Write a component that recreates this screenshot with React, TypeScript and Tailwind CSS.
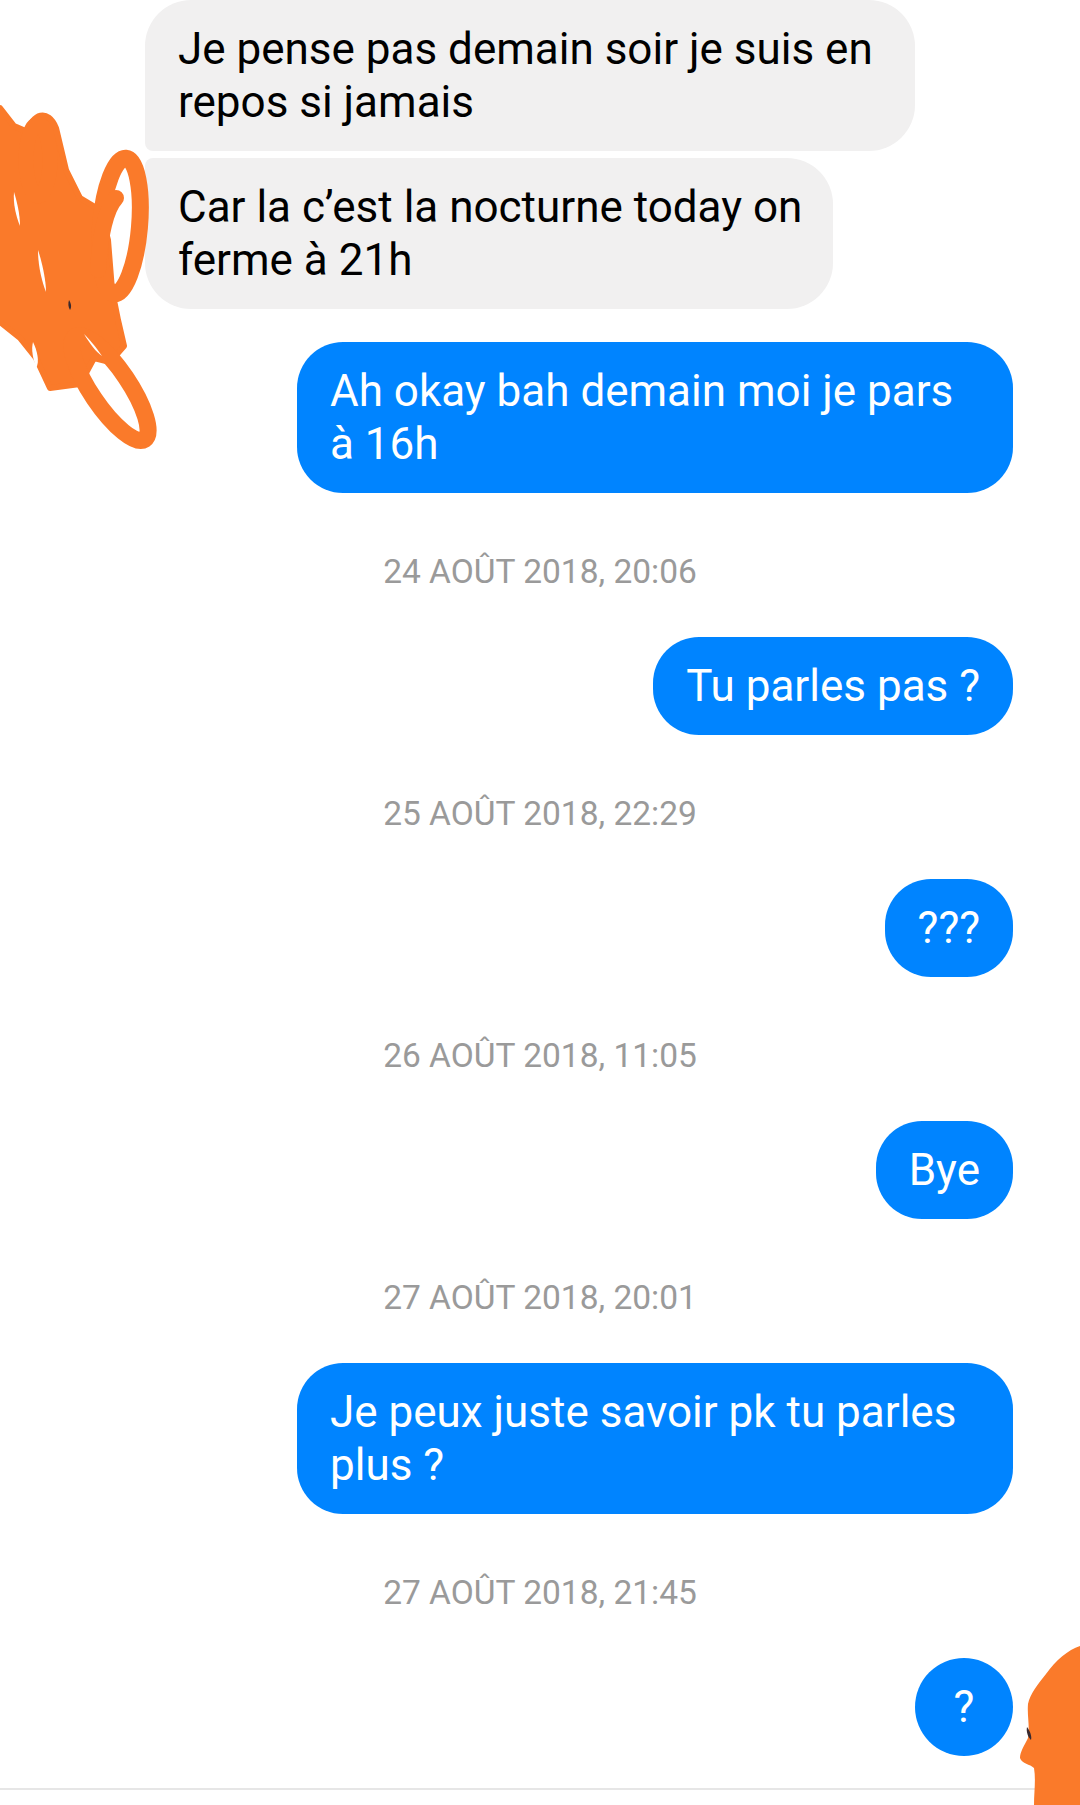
import React from 'react';

type Msg =
    | { kind: 'in'; lines: string[]; width: string; corner: string }
    | { kind: 'out'; lines: string[]; width?: string }
    | { kind: 'time'; text: string };

const thread: Msg[] = [
    { kind: 'in', lines: ['Je pense pas demain soir je suis en', 'repos si jamais'], width: 'w-[770px]', corner: 'rounded-bl-[8px]' },
    { kind: 'in', lines: ['Car la c’est la nocturne today on', 'ferme à 21h'], width: 'w-[688px]', corner: 'rounded-tl-[8px]' },
    { kind: 'out', lines: ['Ah okay bah demain moi je pars', 'à 16h'], width: 'w-[716px]' },
    { kind: 'time', text: '24 AOÛT 2018, 20:06' },
    { kind: 'out', lines: ['Tu parles pas ?'] },
    { kind: 'time', text: '25 AOÛT 2018, 22:29' },
    { kind: 'out', lines: ['???'] },
    { kind: 'time', text: '26 AOÛT 2018, 11:05' },
    { kind: 'out', lines: ['Bye'] },
    { kind: 'time', text: '27 AOÛT 2018, 20:01' },
    { kind: 'out', lines: ['Je peux juste savoir pk tu parles', 'plus ?'], width: 'w-[716px]' },
    { kind: 'time', text: '27 AOÛT 2018, 21:45' },
];

function Lines({ lines }: { lines: string[] }) {
    return (
        <>
            {lines.map((l, i) => (
                <React.Fragment key={i}>
                    {i > 0 && <br />}
                    {l}
                </React.Fragment>
            ))}
        </>
    );
}

export default function App() {
    return (
        <div className="relative w-[1080px] h-[1805px] overflow-hidden bg-white font-['Roboto','Noto_Sans',sans-serif]">
            {/* Conversation */}
            <div className="flex flex-col pl-[145px] pr-[67px]">
                {thread.map((m, i) => {
                    if (m.kind === 'time') {
                        return (
                            <div key={i} className="mt-[61px] mb-[47px] h-[36px] leading-[36px] -ml-[145px] pl-[67px] text-center text-[33.5px] text-[#9a9a9a]">
                                {m.text}
                            </div>
                        );
                    }
                    if (m.kind === 'in') {
                        return (
                            <div
                                key={i}
                                className={`self-start ${m.width} ${i > 0 ? 'mt-[7px]' : ''} rounded-[46px] ${m.corner} bg-[#f1f0f0] px-[33px] py-[22.5px] text-[44px] leading-[53px] text-black whitespace-nowrap`}
                            >
                                <Lines lines={m.lines} />
                            </div>
                        );
                    }
                    const prevIn = i > 0 && thread[i - 1].kind === 'in';
                    return (
                        <div
                            key={i}
                            className={`self-end ${m.width ?? ''} ${prevIn ? 'mt-[33px]' : ''} rounded-[46px] bg-[#0084ff] px-[33px] py-[22.5px] text-[44px] leading-[53px] text-white whitespace-nowrap`}
                        >
                            <Lines lines={m.lines} />
                        </div>
                    );
                })}

                {/* Last "?" bubble */}
                <div className="self-end flex h-[98px] w-[98px] items-center justify-center rounded-full bg-[#0084ff] text-[44px] text-white">
                    ?
                </div>
            </div>

            {/* Composer divider */}
            <div className="mt-[32px] border-t-2 border-[#e6e6e6]" />

            {/* Orange scribble hiding the avatar on the left */}
            <svg className="absolute left-0 top-0" width="160" height="460" viewBox="0 0 160 460">
                <g fill="#fa7a2a" stroke="#fa7a2a" strokeLinecap="round" strokeLinejoin="round">
                    <path
                        strokeWidth="6"
                        d="M0,108 L14,126 L28,132 C32,114 48,108 56,128 L66,170 L80,198 L100,210 L108,240 L112,290 L118,320 L124,346 L110,362 L94,358 L80,384 L50,388 L36,358 L20,338 L0,322 Z"
                    />
                    <ellipse cx="120" cy="226" rx="19.5" ry="68" transform="rotate(5 120 226)" fill="none" strokeWidth="17" />
                    <path d="M98,270 C100,236 106,208 116,198" fill="none" strokeWidth="16" />
                    <ellipse cx="110" cy="388" rx="19" ry="62" transform="rotate(-34 110 388)" fill="none" strokeWidth="17" />
                    <ellipse cx="38" cy="160" rx="12" ry="36" fill="none" strokeWidth="15" />
                </g>
                <g fill="#ffffff">
                    <path d="M14,192 C17,202 20,214 20,226 C16,216 13,204 14,192 Z" />
                    <path d="M38,250 C42,262 46,280 46,292 C42,282 38,266 38,250 Z" />
                    <path d="M33,342 C37,350 40,362 36,368 C33,358 31,350 33,342 Z" />
                    <path d="M84,334 C92,342 98,350 102,356 C96,352 90,344 84,334 Z" />
                </g>
                <path fill="#3a2a2e" d="M69,300 C71,303 72,307 70,310 C68,307 68,303 69,300 Z" />
            </svg>

            {/* Orange scribble hiding the read receipt on the right */}
            <svg className="absolute left-[1010px] top-[1640px]" width="70" height="165" viewBox="1010 1640 70 165">
                <path
                    fill="#fa7a2a"
                    d="M1080,1646 C1068,1650 1056,1660 1046,1674 C1038,1684 1030,1694 1028,1704 C1027,1716 1030,1726 1028,1738 C1024,1746 1020,1752 1020,1758 C1022,1764 1030,1764 1034,1768 C1036,1780 1034,1792 1034,1805 L1080,1805 Z"
                />
                <path fill="#3a2a2e" d="M1027,1727 C1030,1731 1032,1736 1031,1740 C1028,1737 1026,1732 1027,1727 Z" />
            </svg>
        </div>
    );
}
